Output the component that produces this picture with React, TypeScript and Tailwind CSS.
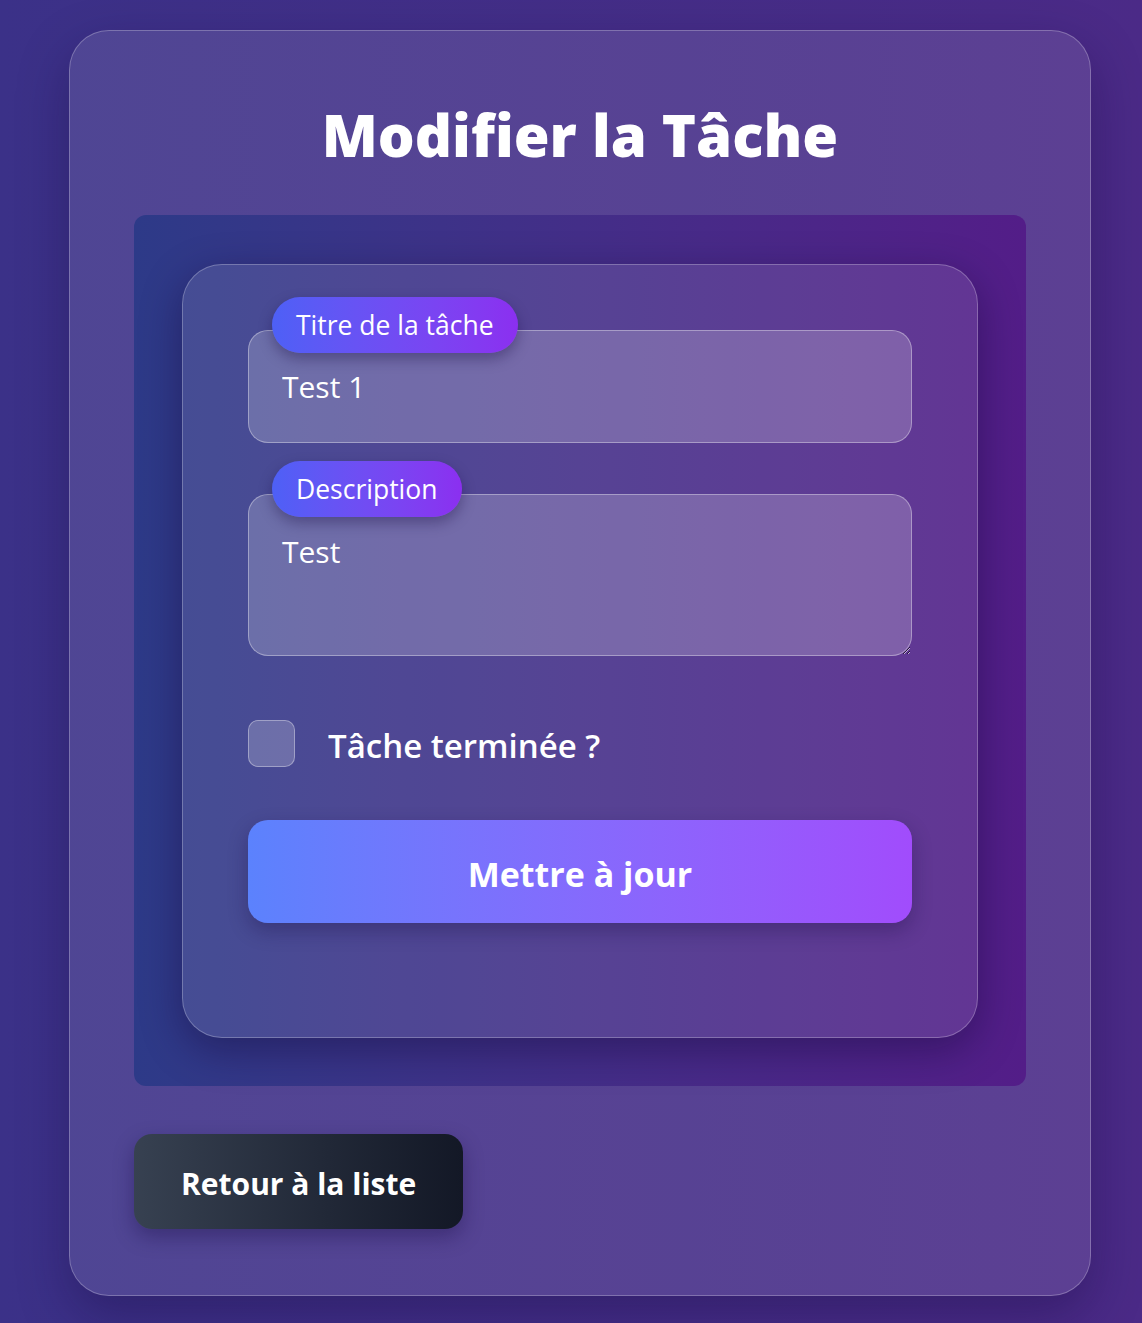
import React from "react";

const font = { fontFamily: '"Open Sans", "Noto Sans", sans-serif' };

const FieldLabel: React.FC<{ children: React.ReactNode }> = ({ children }) => (
  <span className="absolute left-[24px] -top-[33px] z-10 rounded-full bg-gradient-to-r from-[#4d60f6] to-[#8b2ff0] px-[24px] py-[10px] text-[26.5px] leading-[36px] text-white shadow-[0_6px_14px_rgba(20,10,60,0.35)]">
    {children}
  </span>
);

export default function App() {
  return (
    <div
      className="min-h-[1323px] bg-gradient-to-r from-[#3b3188] to-[#4b2a87] pt-[30px] pb-[28px] pl-[69px]"
      style={font}
    >
      <div className="w-[1022px] rounded-[40px] border border-white/25 bg-white/10 px-16 pt-16 pb-[66px] shadow-[0_20px_50px_rgba(20,10,60,0.35)]">
        <h1 className="text-center text-[58px] font-extrabold leading-[80px] text-white">
          Modifier la Tâche
        </h1>

        <div className="mt-[40px] rounded-[12px] bg-gradient-to-r from-[#2d3a88] to-[#531d88] px-12 pt-[49px] pb-[48px]">
          <form className="rounded-[40px] border border-white/25 bg-white/10 pl-[65px] pr-[65px] pt-[65px] pb-[114px] shadow-[0_12px_40px_rgba(15,5,50,0.4)]">
            <div className="relative">
              <FieldLabel>Titre de la tâche</FieldLabel>
              <input
                type="text"
                defaultValue="Test 1"
                className="block h-[113px] w-full rounded-[20px] border border-white/35 bg-white/20 px-[33px] text-[30px] text-white outline-none"
              />
            </div>

            <div className="relative mt-[51px]">
              <FieldLabel>Description</FieldLabel>
              <textarea
                defaultValue="Test"
                className="block h-[162px] w-full rounded-[20px] border border-white/35 bg-white/20 px-[33px] pt-[37px] text-[30px] leading-[40px] text-white outline-none"
              />
            </div>

            <label className="mt-[64px] flex h-[47px] items-center gap-[33px]">
              <input
                type="checkbox"
                className="m-0 block h-[47px] w-[47px] shrink-0 appearance-none rounded-[10px] border border-white/35 bg-white/20"
              />
              <span className="pt-[3px] text-[33px] font-semibold leading-[47px] text-white">Tâche terminée ?</span>
            </label>

            <button
              type="button"
              className="mt-[53px] block h-[103px] w-full rounded-[20px] bg-gradient-to-r from-[#5b82fd] to-[#a14cfc] pt-[6px] text-[34px] font-bold text-white shadow-[0_8px_20px_rgba(20,10,60,0.3)]"
            >
              Mettre à jour
            </button>
          </form>
        </div>

        <button
          type="button"
          className="mt-[48px] h-[95px] rounded-[18px] bg-gradient-to-r from-[#374151] to-[#131826] px-[47px] pt-[4px] text-[30px] font-bold text-white shadow-[0_8px_20px_rgba(20,10,60,0.35)]"
        >
          Retour à la liste
        </button>
      </div>
    </div>
  );
}
